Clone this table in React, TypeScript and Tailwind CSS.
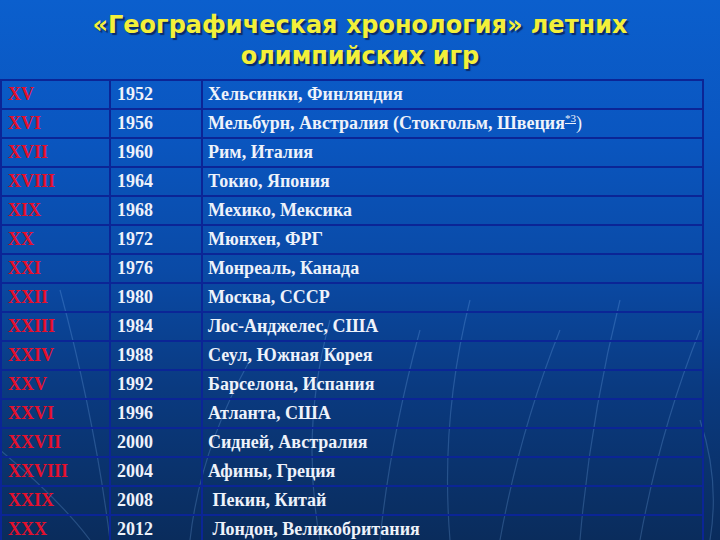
const rows: [string, string, string][] = [
  ['XV', '1952', 'Хельсинки, Финляндия'],
  ['XVI', '1956', 'Мельбурн, Австралия (Стокгольм, Швеция'],
  ['XVII', '1960', 'Рим, Италия'],
  ['XVIII', '1964', 'Токио, Япония'],
  ['XIX', '1968', 'Мехико, Мексика'],
  ['XX', '1972', 'Мюнхен, ФРГ'],
  ['XXI', '1976', 'Монреаль, Канада'],
  ['XXII', '1980', 'Москва, СССР'],
  ['XXIII', '1984', 'Лос-Анджелес, США'],
  ['XXIV', '1988', 'Сеул, Южная Корея'],
  ['XXV', '1992', 'Барселона, Испания'],
  ['XXVI', '1996', 'Атланта, США'],
  ['XXVII', '2000', 'Сидней, Австралия'],
  ['XXVIII', '2004', 'Афины, Греция'],
  ['XXIX', '2008', '\u00a0Пекин, Китай'],
  ['XXX', '2012', '\u00a0Лондон, Великобритания'],
];

// фоновые дуги, как на слайде
function Swooshes() {
  return (
    <svg className="pointer-events-none absolute inset-0" width="720" height="540" viewBox="0 0 720 540">
      <g fill="none" stroke="#8fc4ff" strokeOpacity="0.22" strokeWidth="1.2">
        <path d="M60 290 Q95 420 110 540" />
        <path d="M250 360 Q200 450 190 540" />
        <path d="M330 320 Q300 430 320 540" />
        <path d="M420 330 Q390 440 380 540" />
        <path d="M470 300 Q440 420 450 540" />
        <path d="M560 330 Q520 430 500 540" />
        <path d="M620 300 Q590 420 580 540" />
        <path d="M700 330 Q660 430 640 540" />
        <path d="M0 450 Q60 500 90 540" />
        <path d="M700 420 Q720 480 710 540" />
      </g>
    </svg>
  );
}

export default function App() {
  return (
    <div className="relative h-[540px] w-[720px] overflow-hidden bg-[linear-gradient(180deg,#0b5fcd_0%,#0a56c0_25%,#0a4aa6_50%,#0a3a80_72%,#0a2c5c_100%)]">
      <Swooshes />
      <h1
        className="relative h-[73px] pt-[10px] text-center text-[24px] font-bold leading-[31px] text-[#f3f03a] [text-shadow:2px_2px_1px_#0a2a6a]"
        style={{ fontFamily: '"DejaVu Sans", "Noto Sans", sans-serif' }}
      >
        «Географическая хронология» летних
        <br />
        олимпийских игр
      </h1>
      <div
        className="relative mt-[6px] w-[704px] border-t-2 border-l-2 border-r-2 border-[#0b2596]"
        style={{ fontFamily: '"Liberation Serif", "Times New Roman", serif' }}
      >
        {rows.map(([n, year, city]) => (
          <div key={n} className="grid h-[29px] grid-cols-[109px_92px_1fr] border-b-2 border-[#0b2596] text-[18px] font-bold">
            <div className="flex items-center border-r-2 border-[#0b2596] pl-[6px] text-[#e4102c]">{n}</div>
            <div className="flex items-center border-r-2 border-[#0b2596] pl-[6px] text-[#eef2fa]">{year}</div>
            <div className="flex items-center whitespace-pre pl-[5px] text-[#eef2fa]">
              {city}
              {n === 'XVI' && (
                <>
                  <span className="relative -top-[5px] text-[11px] font-normal underline">*3</span>
                  <span className="font-normal">)</span>
                </>
              )}
            </div>
          </div>
        ))}
      </div>
    </div>
  );
}
